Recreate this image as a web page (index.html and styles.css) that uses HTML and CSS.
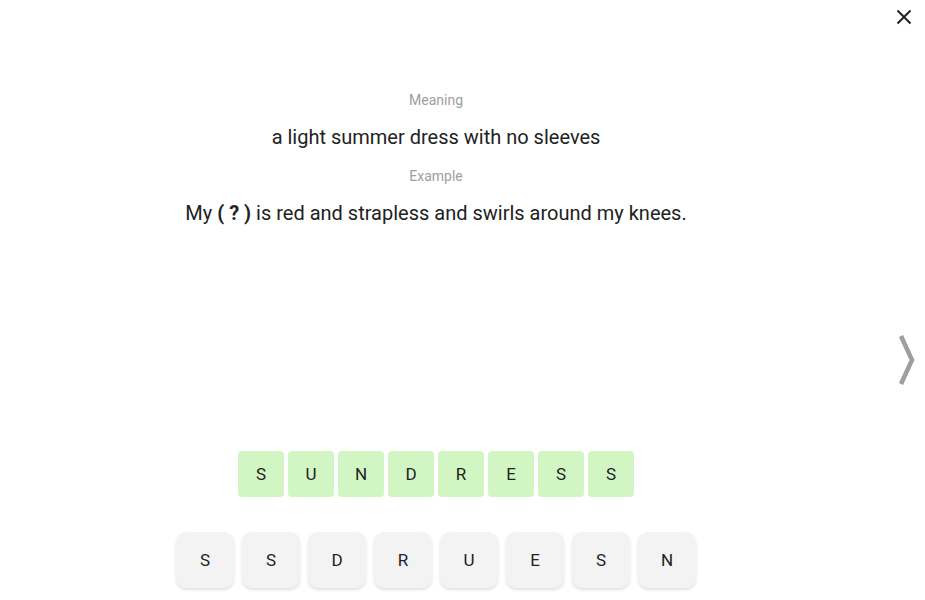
FILE: index.html
```html
<!DOCTYPE html>
<html>
<head>
<meta charset="utf-8">
<link rel="stylesheet" href="styles.css">
</head>
<body>
<div class="page">
  <main class="main">
    <section class="clue">
      <div class="label">Meaning</div>
      <div class="text">a light summer dress with no sleeves</div>
      <div class="label label-example">Example</div>
      <div class="text">My <b class="blank">( ? )</b> is red and strapless and swirls around my knees.</div>
    </section>
    <section class="answer">
      <div class="slots">
        <span class="slot">S</span><span class="slot">U</span><span class="slot">N</span><span class="slot">D</span><span class="slot">R</span><span class="slot">E</span><span class="slot">S</span><span class="slot">S</span>
      </div>
      <div class="keys">
        <button class="key">S</button><button class="key">S</button><button class="key">D</button><button class="key">R</button><button class="key">U</button><button class="key">E</button><button class="key">S</button><button class="key">N</button>
      </div>
    </section>
  </main>
  <aside class="side">
    <button class="close" aria-label="Close">
      <svg width="16" height="16" viewBox="0 0 16 16"><path d="M1.5 1.5 L14.5 14.5 M14.5 1.5 L1.5 14.5" stroke="#222" stroke-width="2" fill="none"/></svg>
    </button>
    <button class="next" aria-label="Next">
      <svg width="20" height="52" viewBox="0 0 20 52"><path d="M4 2 L15 26 L4 50" stroke="#9e9e9e" stroke-width="4.5" fill="none" stroke-linejoin="miter"/></svg>
    </button>
  </aside>
</div>
</body>
</html>
```
FILE: styles.css
```css
* { box-sizing: border-box; }
html, body { margin: 0; padding: 0; background: #fff; }
body { font-family: Roboto, "Noto Sans", sans-serif; color: #222; }
.page { display: flex; height: 600px; width: 925px; }
.main { width: 872px; display: flex; flex-direction: column; align-items: center; padding-top: 92px; padding-bottom: 12px; }
.clue { text-align: center; display: flex; flex-direction: column; align-items: center; }
.label { font-size: 14px; line-height: 16px; color: #9e9e9e; }
.text { font-size: 20px; line-height: 24px; color: #222; margin-top: 17px; }
.label-example { margin-top: 19px; }
.blank { font-weight: 700; }
.answer { margin-top: auto; display: flex; flex-direction: column; align-items: center; }
.slots { display: flex; gap: 4px; }
.slot { width: 46px; height: 46px; background: #d1f6c3; border-radius: 4px; display: flex; align-items: center; justify-content: center; font-size: 17px; color: #222; }
.keys { display: flex; gap: 8px; margin-top: 35px; }
.key { width: 58px; height: 56px; border: none; background: #f3f3f3; border-radius: 10px; font-family: Roboto, sans-serif; font-size: 17px; color: #222; box-shadow: 0 2px 3px rgba(0,0,0,0.12); padding: 0; }
.side { flex: 1; display: flex; flex-direction: column; align-items: center; }
.close { border: none; background: none; padding: 0; margin-top: 9px; margin-left: 11px; width: 16px; height: 16px; display: block; }
.close svg { display: block; }
.next { border: none; background: none; padding: 0; margin-top: 309px; margin-left: 17px; display: block; }
.next svg { display: block; }
```
